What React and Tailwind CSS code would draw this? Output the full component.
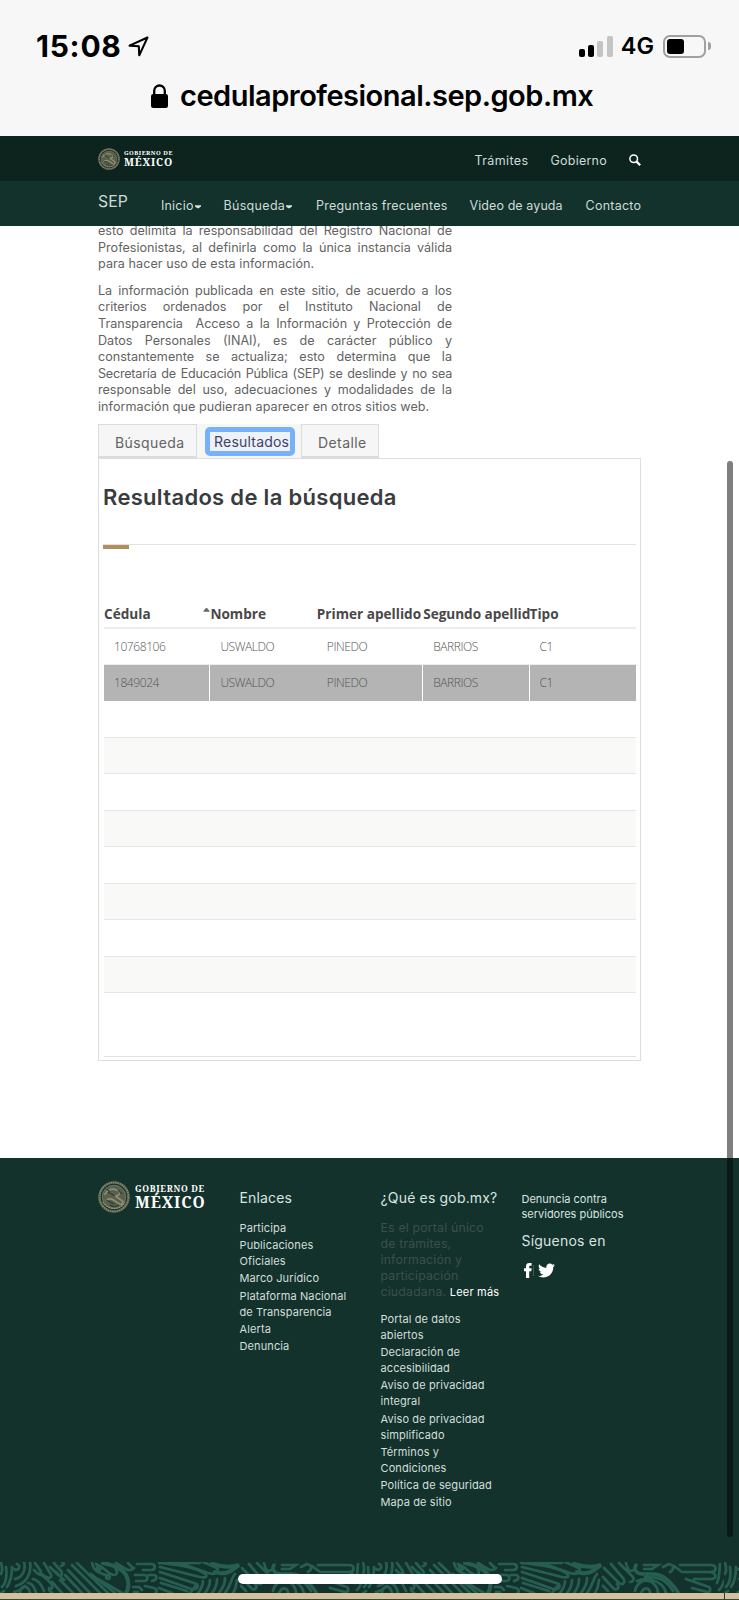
import React from "react";
import { FaTwitter } from "react-icons/fa";

const paragraphs = [
  [
    "esto delimita la responsabilidad del Registro Nacional de",
    "Profesionistas, al definirla como la única instancia válida",
    "para hacer uso de esta información.",
  ],
  [
    "La información publicada en este sitio, de acuerdo a los",
    "criterios ordenados por el Instituto Nacional de",
    "Transparencia \u00a0Acceso a la Información y Protección de",
    "Datos Personales (INAI), es de carácter público y",
    "constantemente se actualiza; esto determina que la",
    "Secretaría de Educación Pública (SEP) se deslinde y no sea",
    "responsable del uso, adecuaciones y modalidades de la",
    "información que pudieran aparecer en otros sitios web.",
  ],
];

const rows = [
  ["10768106", "USWALDO", "PINEDO", "BARRIOS", "C1"],
  ["1849024", "USWALDO", "PINEDO", "BARRIOS", "C1"],
];

const enlaces = [
  ["Participa"],
  ["Publicaciones", "Oficiales"],
  ["Marco Jurídico"],
  ["Plataforma Nacional", "de Transparencia"],
  ["Alerta"],
  ["Denuncia"],
];

const portal = [
  ["Portal de datos", "abiertos"],
  ["Declaración de", "accesibilidad"],
  ["Aviso de privacidad", "integral"],
  ["Aviso de privacidad", "simplificado"],
  ["Términos y", "Condiciones"],
  ["Política de seguridad"],
  ["Mapa de sitio"],
];

function lineClass(index, count) {
  if (index === count - 1) return "whitespace-nowrap tracking-[0.004em]";
  if (index === 5) return "tracking-[-0.018em] [text-align-last:justify]";
  return "[text-align-last:justify]";
}

function Seal({ className }) {
  return (
    <svg viewBox="0 0 32 32" className={className} fill="none">
      <circle cx="16" cy="16" r="14.5" stroke="#77786180" strokeWidth="2.6" />
      <circle cx="16" cy="16" r="14.5" stroke="#85836b" strokeWidth="2" strokeDasharray="1.6 .7" />
      <circle cx="16" cy="16" r="11.8" fill="#59604e" stroke="#7d7c64" strokeWidth=".8" />
      <path d="M6.500 14c2-5 7-7 12-5 4 1 4 4 2 5l-3 1 7 5c1 2-1 4-3 3l-6-4c-3-2-6-1-8 1" stroke="#918d73" strokeWidth="1.7" />
      <path d="M10 11l7 4M8 19c3 1 6 4 9 4M20 9l4 4M12 24c3 2 6 2 9 0M9 8l3 3" stroke="#2b4036" strokeWidth="1.2" />
      <path d="M5 21c4 8 18 9 22 0" stroke="#a39d80" strokeWidth="1.2" strokeDasharray="1.6 1" />
    </svg>
  );
}

function Caret() {
  return (
    <svg viewBox="0 0 6 4" className="ml-[1px] h-[4px] w-[6px] fill-[#d5e0dc]">
      <path d="M0 .3H6V1.600L3.700 3.300H2.300L0 1.600z" />
    </svg>
  );
}

function Frieze() {
  return (
    <svg className="h-[31px] w-full shrink-0" fill="none">
      <defs>
        <pattern id="frieze" width="362" height="31" patternUnits="userSpaceOnUse">
          <rect width="362" height="31" fill="#13322b" />
          <g stroke="#265f50" strokeWidth="2.700" strokeLinecap="round">
            <path d="M1 12c2-4 1-8 0-11M2 25c5-5 5-12 4-20M7 25c4-6 5-12 5-20M1 31l3-2M17 2a3 3 0 1 1-3 5M15 17c8-2 11-9 9-17M16 24c10-3 16-12 14-24M14 30c5-1 8-3 11-6" />
            <path d="M35 1l5 7c2 3 0 5-3 3l-3-3M44 1l6 10c3 4 0 6-4 4l-6-4M54 1l7 8c2 3 0 6-3 4l-8-8M61 4c4-1 3-3 1-4M20 31c0-6 6-9 9-3l1 3M28 21c4 0 7 5 8 10M33 17c6 1 9 7 11 12M38 12c6 1 10 6 14 11 1 3-1 5-3 3" />
            <path d="M60 18l13 13M65 13l17 18M68 8l22 23M72 3l28 28M77 1l31 30M92 1c2 9 8 10 14 12M91 12l24 19M98 17l24 14M96 2c10 4 12 11 18 11 5 0 3-7-2-10M52 20l10 11M49 28l3 3M56 10l8 8" />
            <path d="M103 1c16 3 24 9 25 18 1 6 0 9-2 12" strokeWidth="4" />
            <circle cx="99" cy="6" r="1.800" /><circle cx="108" cy="15" r="1.800" />
            <path d="M116 1l10 6c2 2 6 1 8-1M128 1l5 5M137 2h14c5 0 5 6 0 6h-8M135 13h9c4 0 5 6 0 6h-8M149 13l5 0c4 1 3 5-2 6M133 25h6l3 3M145 24l9 2c3 1 3 3 2 5M134 30h4" />
            <path d="M159 1c20 2 35 4 45 10 5 4 1 5-4 4l-40-10M160 10l34 11c6 2 4 7-3 6l-31-11M161 21l26 8M159 26l13 5M166 1h34M180 1l28 10c7 2 12 0 9-5l-14-6" />
            <path d="M212 2c10 3 18 4 27 1l-8 6c-6 3-11 3-16 1" strokeWidth="4" />
            <path d="M190 31l7-9M198 31c3-4 5-7 5-12M205 31c4-5 5-8 5-13M212 31c4-5 5-9 5-14M219 31c5-7 6-10 6-15M225 31c7-9 5-13 10-19M233 31c4-6 3-9 4-13" />
            <path d="M242 6l15 15c4 3 7-1 4-5L249 2M257 1l13 13c3 3 1 6-2 6M241 15l10 11c4 4 7-1 4-4M241 24l5 5M264 1c2 8 4 10 9 6" />
            <path d="M274 3c-3 5 1 9 7 9h9c10 0 17 5 26 18" strokeWidth="3.500" />
            <path d="M282 3h14l-6 4h-8M301 5l6-3c5 1 6 5 1 8M312 4l8 6M279 31c4-8 9-4 9 0M273 29c3-15 22-13 23 2M275 19c14-6 27 3 29 12M283 15c17-1 23 6 28 14" />
            <path d="M318 3h31c6 0 6 7 0 7h-20M322 10h25c7 0 9 7 2 7h-17M324 17l20 7c6 1 5 6 1 6l-15-4M355 21c3-7 2-12 3-19M357 28c4-4 4-7 5-9" />
          </g>
        </pattern>
      </defs>
      <rect width="100%" height="31" fill="url(#frieze)" />
    </svg>
  );
}

function LinkList({ items }) {
  return (
    <ul className="text-[11px] leading-[16px] tracking-[0.01em] text-[#d3dfdb]">
      {items.map((lines) => (
        <li key={lines.join(" ")} className="mb-[1.2px]">
          {lines.map((l) => (
            <div key={l} className="whitespace-nowrap">{l}</div>
          ))}
        </li>
      ))}
    </ul>
  );
}

export default function App() {
  return (
    <div className="relative flex h-[1600px] w-[739px] flex-col overflow-hidden bg-white font-['Inter','Noto_Sans',sans-serif]">
      <header className="h-[136px] shrink-0 bg-[#f7f7f7] text-black">
        <div className="flex h-[73px] items-end justify-between pr-[28px] pl-[36px]">
          <div className="flex items-center">
            <span className="text-[30px] leading-[54px] font-bold tracking-[0.025em]">15:08</span>
            <svg viewBox="0 0 20 20" className="ml-[6px] h-[21px] w-[21px]" fill="none" stroke="black" strokeWidth="2" strokeLinejoin="round">
              <path d="M18.500 1.500L1.500 9.200l8.800.6.4 8.600z" />
            </svg>
          </div>
          <div className="flex items-center">
            <div className="flex h-[21px] items-end gap-[3.3px]">
              <i className="h-[8px] w-[6px] rounded-[2px] bg-black" />
              <i className="h-[12px] w-[6px] rounded-[2px] bg-black" />
              <i className="h-[16px] w-[6px] rounded-[2px] bg-[#c4c4c4]" />
              <i className="h-[21px] w-[6px] rounded-[2px] bg-[#c4c4c4]" />
            </div>
            <span className="ml-[8px] text-[23.5px] leading-[54px] font-semibold">4G</span>
            <div className="ml-[9px] h-[23px] w-[43px] rounded-[7px] border-2 border-[#a0a0a0] p-[2px]">
              <div className="h-[15px] w-[16.5px] rounded-[3px] bg-black" />
            </div>
            <i className="ml-[2px] h-[8px] w-[3px] rounded-r-full bg-[#a0a0a0]" />
          </div>
        </div>
        <div className="flex items-center pl-[151px]">
          <svg viewBox="0 0 17 24" className="h-[24px] w-[17px]">
            <rect y="10" width="17" height="14" rx="2.200" />
            <path d="M3.200 11V6.800a5.300 5.300 0 0 1 10.600 0V11" fill="none" stroke="black" strokeWidth="2.300" />
          </svg>
          <span className="ml-[12px] text-[29px] leading-[46px] font-[560] tracking-[-0.017em]">cedulaprofesional.sep.gob.mx</span>
        </div>
      </header>

      <nav className="shrink-0 text-[12.5px] text-[#cfdbd7]">
        <div className="flex h-[45px] items-center bg-[#0c231e] pr-[98px] pl-[98px]">
          <Seal className="h-[22px] w-[22px]" />
          <div className="ml-[4px] flex flex-col font-['Noto_Serif','DejaVu_Serif','Liberation_Serif',serif] font-bold text-white">
            <span className="text-[6px] leading-[7px] tracking-[0.08em]">GOBIERNO DE</span>
            <span className="text-[10.5px] leading-[10px] tracking-[0.08em]">MÉXICO</span>
          </div>
          <div className="ml-auto flex items-center pt-[5px] tracking-[0.02em]">
            <span className="tracking-[0.03em]">Trámites</span>
            <span className="ml-[22px]">Gobierno</span>
            <svg viewBox="0 0 12 12" className="mb-[3px] ml-[22px] h-[12px] w-[12px]" fill="none" stroke="white">
              <circle cx="4.700" cy="4.700" r="3.800" strokeWidth="1.500" />
              <path d="M7.600 7.600L11.200 11.200" strokeWidth="2.200" />
            </svg>
          </div>
        </div>
        <div className="flex h-[45px] items-center bg-[#13322b] pl-[98px] whitespace-nowrap">
          <span className="w-[63px] pb-[3px] text-[15.8px]">SEP</span>
          <span className="flex w-[62.500px] items-center pt-[6px] tracking-[0.015em]">Inicio<Caret /></span>
          <span className="flex w-[92.500px] items-center pt-[6px] tracking-[0.025em]">Búsqueda<Caret /></span>
          <span className="w-[153.500px] pt-[6px] tracking-[0.018em]">Preguntas frecuentes</span>
          <span className="w-[116px] pt-[6px] tracking-[0.007em]">Video de ayuda</span>
          <span className="pt-[6px] tracking-[0.02em]">Contacto</span>
        </div>
      </nav>

      <main className="h-[932px] shrink-0 overflow-hidden px-[98px] text-[#636363]">
        <div className="-mt-[3px] h-[201px] w-[354px] text-[12.6px] leading-[16.6px]">
          {paragraphs.map((lines, i) => (
            <div key={i} className="mb-[10px]">
              {lines.map((line, j) => (
                <p key={line} className={lineClass(j, lines.length)}>{line}</p>
              ))}
            </div>
          ))}
        </div>

        <div className="flex h-[34px] items-stretch text-[14px] tracking-[0.03em]">
          <div className="flex w-[99px] items-center border border-b-2 border-[#dcdcdc] bg-[#f6f6f6] pt-[4px] pl-[16px]">Búsqueda</div>
          <div className="flex w-[104px] items-center bg-[#f6f6f6] pl-[8px]">
            <div className="flex h-[29px] w-[90px] items-center rounded-[5px] border-[5px] border-[#77b1fa] bg-[#eef1f7] pt-px pl-[4px] tracking-[0.015em] text-[#3c4466]">Resultados</div>
          </div>
          <div className="flex w-[78px] items-center border border-b-2 border-[#dcdcdc] bg-[#f6f6f6] pt-[4px] pl-[16px]">Detalle</div>
        </div>

        <section className="h-[603px] w-[543px] border border-[#dedede] px-[4px]">
          <h2 className="pt-[22px] text-[22px] leading-[32px] font-semibold tracking-[0.014em] text-[#393c3e]">Resultados de la búsqueda</h2>
          <div className="mt-[31px] h-[5px] border-t border-[#e3e3e3]">
            <div className="h-[4px] w-[26px] bg-[#b38e5d]" />
          </div>
          <div className="pt-[53px] pl-[1px] font-['Open_Sans','Noto_Sans',sans-serif]">
            <div className="grid h-[27px] grid-cols-5 border-b-2 border-[#ececec] text-[13.6px] leading-[23px] font-bold whitespace-nowrap text-[#484848]">
              <span className="flex justify-between">
                Cédula
                <svg viewBox="0 0 6 4" className="mt-[6px] h-[4px] w-[7px] fill-[#666]"><path d="M2.500 0h1L6 3v.8H0V3z" /></svg>
              </span>
              <span>Nombre</span>
              <span>Primer apellido</span>
              <span className="tracking-[-0.002em]">Segundo apellid</span>
              <span>Tipo</span>
            </div>
            {rows.map((r, i) => (
              <div key={r[0]} className={i ? "grid h-[36px] grid-cols-5 bg-[#b4b4b4]" : "grid h-[36px] grid-cols-5 border-b border-[#ececec]"}>
                {r.map((c, j) => (
                  <span
                    key={j}
                    className={
                      i && (j === 0 || j === 2 || j === 3)
                        ? "border-r border-white pl-[10px] text-[12px] leading-[36px] font-light tracking-[-0.035em] text-[#555]"
                        : "pl-[10px] text-[12px] leading-[36px] font-light tracking-[-0.035em] text-[#555]"
                    }
                  >
                    {c}
                  </span>
                ))}
              </div>
            ))}
            {[0, 1, 2, 3, 4, 5, 6, 7].map((n) => (
              <div key={n} className={n % 2 ? "h-[36.5px] border-b border-[#e6e6e6] bg-[#f9f9f8]" : "h-[36.5px] border-b border-[#e6e6e6]"} />
            ))}
            <div className="h-[64px] border-b border-[#e3e3e3]" />
          </div>
        </section>
      </main>

      <footer className="flex h-[404px] shrink-0 bg-[#13322b] px-[98px] pt-[23px] text-[#d9e4e0]">
        <div className="flex h-[32px] w-[141.5px] items-center whitespace-nowrap">
          <Seal className="h-[32px] w-[32px]" />
          <div className="ml-[5px] flex flex-col font-['Noto_Serif','DejaVu_Serif','Liberation_Serif',serif] font-bold text-white">
            <span className="text-[8.6px] leading-[11px] tracking-[0.08em]">GOBIERNO DE</span>
            <span className="text-[15.5px] leading-[15px] tracking-[0.06em]">MÉXICO</span>
          </div>
        </div>
        <div className="w-[141px]">
          <h3 className="mt-[7px] mb-[12px] text-[14px] leading-[20px] tracking-[0.012em]">Enlaces</h3>
          <LinkList items={enlaces} />
        </div>
        <div className="w-[141px]">
          <h3 className="mt-[7px] mb-[12px] text-[14px] leading-[20px] tracking-[0.012em] whitespace-nowrap">¿Qué es gob.mx?</h3>
          <p className="mb-[11px] text-[12.3px] leading-[16px] tracking-[0.015em] whitespace-nowrap text-[#3d4f4a]">
            Es el portal único<br />de trámites,<br />información y<br />participación<br />ciudadana. <span className="text-[11px] text-white">Leer más</span>
          </p>
          <LinkList items={portal} />
        </div>
        <div className="whitespace-nowrap">
          <p className="mt-[11px] text-[11px] leading-[14.5px]">Denuncia contra<br />servidores públicos</p>
          <h3 className="mt-[10px] text-[14px] leading-[20px] tracking-[0.015em]">Síguenos en</h3>
          <div className="mt-[11px] flex items-center text-white">
            <svg viewBox="0 0 8 15" className="ml-[2px] h-[15px] w-[8px] fill-white">
              <path d="M2 15V8.200H0V5.200h2V3.300C2 1.200 3.200 0 5.200 0H7.600v2.800H6.200C5.400 2.800 5.200 3.100 5.200 3.700v1.500h2.500L7.300 8.200H5.200V15z" />
            </svg>
            <i className="ml-[1px] h-[11px] w-px bg-[#3d5a52]" />
            <FaTwitter className="ml-[4px] h-[17px] w-[17px]" />
          </div>
        </div>
      </footer>
      <Frieze />
      <div className="h-[6px] shrink-0 bg-[#d4c19c]" />
      <div className="h-px shrink-0 bg-[#2f4a3c]" />

      <div className="absolute top-[1574px] left-[238px] h-[10px] w-[264px] rounded-full bg-white" />
      <div className="absolute top-[1593px] left-[724px] h-[7px] w-px bg-[#2f3a2c]" />
      <div className="absolute top-[461px] left-[727px] h-[1076px] w-[6px] rounded-full bg-black/50" />
    </div>
  );
}
